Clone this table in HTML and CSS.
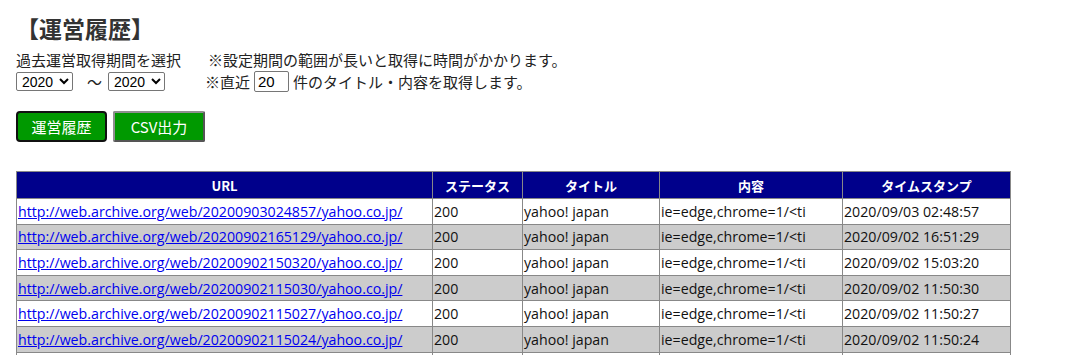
FILE: index.html
```html
<!DOCTYPE html>
<html lang="ja">
<head>
<meta charset="utf-8">
<link rel="stylesheet" href="styles.css">
</head>
<body>
<h1 class="title">【運営履歴】</h1>
<div class="form">
  <div class="col-left">
    <div class="label">過去運営取得期間を選択</div>
    <div class="controls">
      <select class="sel"><option>2020</option></select>
      <span class="tilde">～</span>
      <select class="sel"><option>2020</option></select>
    </div>
  </div>
  <div class="col-right">
    <div class="note">※設定期間の範囲が長いと取得に時間がかかります。</div>
    <div class="note2">※直近 <input class="num" type="text" value="20"> 件のタイトル・内容を取得します。</div>
  </div>
</div>
<div class="buttons">
  <button class="btn btn-active">運営履歴</button>
  <button class="btn">CSV出力</button>
</div>
<table class="grid">
  <colgroup>
    <col class="c-url"><col class="c-status"><col class="c-title"><col class="c-body"><col class="c-time">
  </colgroup>
  <thead>
    <tr><th>URL</th><th>ステータス</th><th>タイトル</th><th>内容</th><th>タイムスタンプ</th></tr>
  </thead>
  <tbody>
    <tr><td><a href="#">http://web.archive.org/web/20200903024857/yahoo.co.jp/</a></td><td>200</td><td>yahoo! japan</td><td>ie=edge,chrome=1/&lt;ti</td><td>2020/09/03 02:48:57</td></tr>
    <tr class="alt"><td><a href="#">http://web.archive.org/web/20200902165129/yahoo.co.jp/</a></td><td>200</td><td>yahoo! japan</td><td>ie=edge,chrome=1/&lt;ti</td><td>2020/09/02 16:51:29</td></tr>
    <tr><td><a href="#">http://web.archive.org/web/20200902150320/yahoo.co.jp/</a></td><td>200</td><td>yahoo! japan</td><td>ie=edge,chrome=1/&lt;ti</td><td>2020/09/02 15:03:20</td></tr>
    <tr class="alt"><td><a href="#">http://web.archive.org/web/20200902115030/yahoo.co.jp/</a></td><td>200</td><td>yahoo! japan</td><td>ie=edge,chrome=1/&lt;ti</td><td>2020/09/02 11:50:30</td></tr>
    <tr><td><a href="#">http://web.archive.org/web/20200902115027/yahoo.co.jp/</a></td><td>200</td><td>yahoo! japan</td><td>ie=edge,chrome=1/&lt;ti</td><td>2020/09/02 11:50:27</td></tr>
    <tr class="alt"><td><a href="#">http://web.archive.org/web/20200902115024/yahoo.co.jp/</a></td><td>200</td><td>yahoo! japan</td><td>ie=edge,chrome=1/&lt;ti</td><td>2020/09/02 11:50:24</td></tr>
    <tr><td><a href="#">http://web.archive.org/web/20200902115021/yahoo.co.jp/</a></td><td>200</td><td>yahoo! japan</td><td>ie=edge,chrome=1/&lt;ti</td><td>2020/09/02 11:50:21</td></tr>
  </tbody>
</table>
</body>
</html>
```
FILE: styles.css
```css
html, body {
  margin: 0;
  padding: 0;
  background: #fff;
}
body {
  padding: 0 16px;
  font-family: "Noto Sans", "Noto Sans CJK JP", sans-serif;
  font-size: 14px;
  color: #222;
}
.title {
  margin: 0;
  padding-top: 13px;
  height: 32px;
  font-family: "Noto Sans CJK JP", sans-serif;
  font-size: 23px;
  line-height: 30px;
  font-weight: bold;
  color: #333;
}
.form {
  display: flex;
  margin-top: 6px;
  font-family: "Noto Sans CJK JP", sans-serif;
}
.col-left {
  width: 189px;
}
.label, .note {
  height: 18px;
  line-height: 18px;
  font-size: 15px;
}
.note {
  padding-left: 3px;
}
.controls, .note2 {
  margin-top: 1px;
  height: 22px;
  display: flex;
  align-items: center;
  font-size: 15px;
}
.sel {
  font-family: "Liberation Sans", "Noto Sans", sans-serif;
  font-size: 14px;
  height: 19px;
  width: 57px;
  padding: 0 0 0 1px;
  border: 1px solid #767676;
  border-radius: 2px;
  background: #fff;
  color: #000;
}
.tilde {
  margin: 0 6px 0 14px;
}
.num {
  width: 35px;
  height: 21px;
  box-sizing: border-box;
  margin: 0 4px;
  padding: 0 3px;
  border: 1px solid #767676;
  border-radius: 2px;
  font-family: "Liberation Sans", sans-serif;
  font-size: 15px;
}
.buttons {
  display: flex;
  gap: 6px;
  margin-top: 19px;
}
.btn {
  height: 31px;
  width: 92px;
  background: #009900;
  color: #fff;
  font-family: "Noto Sans CJK JP", sans-serif;
  font-size: 15px;
  border: 2px solid;
  border-color: #8f8f8f #555 #555 #8f8f8f;
  border-radius: 2px;
  padding: 0;
}
.btn-active {
  width: 91px;
  border: 2px solid #111;
  border-radius: 4px;
}
.grid {
  margin-top: 29px;
  width: 994px;
  border-collapse: collapse;
  table-layout: fixed;
  border: 1px solid #888;
}
.c-url { width: 416px; }
.c-status { width: 90px; }
.c-title { width: 137px; }
.c-body { width: 183px; }
.c-time { width: 168px; }
.grid th {
  background: #00008b;
  color: #fff;
  height: 26px;
  padding: 0;
  font-family: "Noto Sans CJK JP", sans-serif;
  font-size: 13px;
  font-weight: bold;
  border: 1px solid #888;
}
.grid td {
  height: 24.6px;
  padding: 0 1px;
  border: 1px solid #888;
  font-family: "Open Sans", "Noto Sans CJK JP", sans-serif;
  font-size: 14.2px;
  color: #111;
  white-space: nowrap;
  overflow: hidden;
}
.grid tr.alt td {
  background: #cccccc;
}
.grid a {
  color: #0000ee;
  text-decoration: underline;
}
```
